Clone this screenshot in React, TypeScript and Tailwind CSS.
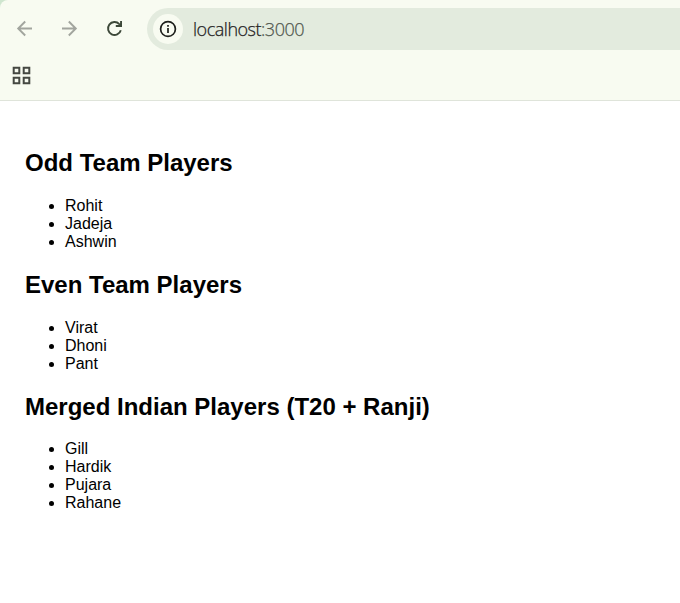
import React from "react";

const teams = [
  { title: "Odd Team Players", players: ["Rohit", "Jadeja", "Ashwin"] },
  { title: "Even Team Players", players: ["Virat", "Dhoni", "Pant"] },
  { title: "Merged Indian Players (T20 + Ranji)", players: ["Gill", "Hardik", "Pujara", "Rahane"] },
];

function Toolbar() {
  return (
    <header className="h-[101px] bg-[#cfe6cf]">
      <div className="h-full rounded-tl-[8px] border-b border-[#dfe4da] bg-[#f8fbf1]">
        <div className="flex h-[58px] items-center pl-[15px]">
          <svg className="mr-[24px] shrink-0" width="20" height="20" viewBox="0 0 20 20" fill="none" stroke="#a2a59e" strokeWidth="1.9">
            <path d="M17 9.5H3.2M10.2 2.5L3.2 9.5L10.2 16.5" />
          </svg>
          <svg className="mr-[26px] shrink-0" width="20" height="20" viewBox="0 0 20 20" fill="none" stroke="#a2a59e" strokeWidth="1.9">
            <path d="M3 9.5H16.8M9.8 2.5L16.8 9.5L9.8 16.5" />
          </svg>
          <svg className="mr-[23px] shrink-0" width="19" height="20" viewBox="0 0 19 20">
            <path d="M15.8 11.2A6.5 6.5 0 1 1 14.3 5.1" fill="none" stroke="#3d4839" strokeWidth="1.9" />
            <path d="M17 2V8H10.8V6H13.3L15.1 4.3V2Z" fill="#3d4839" />
          </svg>
          <div className="flex h-[42px] flex-1 items-center rounded-l-full bg-[#e3ebde] pl-[6px]">
            <span className="flex size-[30px] items-center justify-center rounded-full bg-[#f8fbf1]">
              <svg width="18" height="18" viewBox="0 0 18 18" fill="none" stroke="#1d1f1b" strokeWidth="1.7">
                <circle cx="9" cy="9" r="7.4" />
                <path d="M9 8V13M9 5V6.7" />
              </svg>
            </span>
            <span className="ml-[10px] font-['Open_Sans',sans-serif] text-[18px] font-light tracking-[-0.48px] text-[#1f211d] [-webkit-text-stroke:0.25px_currentColor]">localhost<span className="text-[#51574e]">:3000</span></span>
          </div>
        </div>
        <div className="flex h-[35px] items-center pl-[12px]">
          <svg width="19" height="19" viewBox="0 0 19 19" fill="none" stroke="#454842" strokeWidth="2">
            <path d="M1.7 1.7h5.6v5.6H1.7zM11.7 1.7h5.6v5.6H11.7zM1.7 11.7h5.6v5.6H1.7zM11.7 11.7h5.6v5.6H11.7z" />
          </svg>
        </div>
      </div>
    </header>
  );
}

export default function App() {
  return (
    <div className="h-[603px] overflow-hidden bg-white font-['Liberation_Sans',Arial,sans-serif] text-black">
      <Toolbar />
      <main className="px-[25px] pt-[48px]">
        {teams.map((team) => (
          <section key={team.title} className="group mb-[20px]">
            <h2 className="mb-[20px] text-[24px] leading-[28px] font-bold group-last:mb-[19px]">{team.title}</h2>
            <ul className="list-disc pl-[40px] text-[16px] leading-[18px]">
              {team.players.map((player) => <li key={player}>{player}</li>)}
            </ul>
          </section>
        ))}
      </main>
    </div>
  );
}
